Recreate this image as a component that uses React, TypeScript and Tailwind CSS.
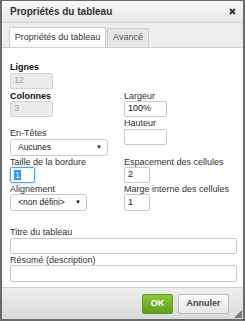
import { useState } from "react";

function Label({ children, bold }: { children: React.ReactNode; bold?: boolean }) {
  return (
    <div
      className={`whitespace-nowrap text-[9px] leading-[10px] ${
        bold ? "font-bold text-[#111]" : "text-[#333]"
      }`}
    >
      {children}
    </div>
  );
}

function TextBox({ value, w, h = "h-[16px]", disabled }: { value?: string; w: string; h?: string; disabled?: boolean }) {
  return (
    <div
      className={`${w} ${h} flex items-center rounded-[2px] border pl-[3px] text-[9px] ${
        disabled ? "border-[#d2d2d2] bg-[#ebebeb] text-[#a0a0a0]" : "border-[#c8c8c8] bg-white text-[#222]"
      }`}
    >
      {value}
    </div>
  );
}

function Select({ value, w }: { value: string; w: string }) {
  return (
    <div
      className={`${w} flex h-[17px] items-center justify-between rounded-[3px] border border-[#c8c8c8] bg-white pl-[7px] pr-[5px] text-[8.5px] text-[#222]`}
    >
      <span className="whitespace-nowrap">{value}</span>
      <span className="text-[6px] text-[#111]">▼</span>
    </div>
  );
}

export default function App() {
  const [tab, setTab] = useState(0);

  return (
    <div
      className="flex h-[321px] w-[245px] flex-col border-x-[2px] border-b-[2px] border-t-[1px] border-[#6a6a6a] bg-white"
      style={{ fontFamily: '"Liberation Sans", Arial, sans-serif' }}
    >
      {/* title bar */}
      <div className="flex h-[21px] shrink-0 items-center justify-between bg-gradient-to-b from-[#fafafa] to-[#e6e6e6] pl-[8px] pr-[7px]">
        <span className="text-[10px] font-bold text-[#333]">Propriétés du tableau</span>
        <svg width="7" height="7" viewBox="0 0 7 7">
          <path d="M1 1 L6 6 M6 1 L1 6" stroke="#333" strokeWidth="1.8" />
        </svg>
      </div>

      {/* tabs */}
      <div className="flex h-[25px] shrink-0 items-end gap-[1px] border-t border-[#d4d4d4] bg-[#ededed] pl-[7px]">
        {["Propriétés du tableau", "Avancé"].map((t, i) => (
          <button
            key={t}
            onClick={() => setTab(i)}
            className={`rounded-t-[2px] border border-b-0 border-[#cccccc] text-[9px] ${
              tab === i
                ? "h-[20px] w-[97px] bg-white text-[#333]"
                : "h-[19px] w-[42px] bg-[#e6e6e6] text-[#555]"
            }`}
          >
            {t}
          </button>
        ))}
      </div>

      {/* body */}
      <div className="flex flex-1 flex-col border-t border-[#d0d0d0] pl-[8px] pr-[6px] pt-[14px]">
        <Label bold>Lignes</Label>
        <div className="mt-[1px]">
          <TextBox value="12" w="w-[43px]" disabled />
        </div>

        <div className="mt-[2px] grid grid-cols-[114px_1fr]">
          <div>
            <Label bold>Colonnes</Label>
            <TextBox value="3" w="w-[43px]" disabled />
            <div className="mt-[11px]">
              <Label>En-Têtes</Label>
            </div>
            <div className="mt-[1px]">
              <Select value="Aucunes" w="w-[98px]" />
            </div>
          </div>
          <div>
            <Label>Largeur</Label>
            <TextBox value="100%" w="w-[43px]" />
            <div className="mt-[1px]">
              <Label>Hauteur</Label>
            </div>
            <div className="mt-[1px]">
              <TextBox w="w-[43px]" />
            </div>
          </div>
        </div>

        <div className="mt-[1px] grid grid-cols-[114px_1fr]">
          <div>
            <Label>Taille de la bordure</Label>
            <div className="flex h-[16px] w-[25px] items-center rounded-[2px] border border-[#5aa2e8] bg-white pl-[3px] text-[9px] shadow-[0_0_3px_#8cc4f5]">
              <span className="bg-[#3390ff] px-[1px] leading-[10px] text-white">1</span>
            </div>
            <div className="mt-[1px]">
              <Label>Alignement</Label>
            </div>
            <Select value="<non défini>" w="w-[77px]" />
          </div>
          <div>
            <Label>Espacement des cellules</Label>
            <TextBox value="2" w="w-[26px]" />
            <div className="mt-[1px]">
              <Label>Marge interne des cellules</Label>
            </div>
            <TextBox value="1" w="w-[26px]" h="h-[17px]" />
          </div>
        </div>

        <div className="mt-[16px]">
          <Label>Titre du tableau</Label>
        </div>
        <div className="mt-[1px]">
          <TextBox w="w-full" />
        </div>
        <div className="mt-[1px]">
          <Label>Résumé (description)</Label>
        </div>
        <TextBox w="w-full" h="h-[17px]" />
      </div>

      {/* footer */}
      <div className="relative flex h-[32px] shrink-0 items-center justify-end gap-[5px] border-t border-[#cfcfcf] bg-gradient-to-b from-[#eeeeee] to-[#dadada] pr-[14px]">
        <button className="h-[20px] w-[31px] rounded-[2px] border border-[#5d9a16] bg-gradient-to-b from-[#8fc73e] to-[#5b9f18] text-[9px] font-bold text-white">
          OK
        </button>
        <button className="h-[20px] w-[51px] rounded-[2px] border border-[#bcbcbc] bg-gradient-to-b from-[#fbfbfb] to-[#e6e6e6] text-[9px] font-bold text-[#444]">
          Annuler
        </button>
        <svg className="absolute bottom-[1px] right-[1px]" width="8" height="8" viewBox="0 0 8 8">
          <polygon points="8,0 8,8 0,8" fill="#7a7a7a" />
        </svg>
      </div>
    </div>
  );
}
